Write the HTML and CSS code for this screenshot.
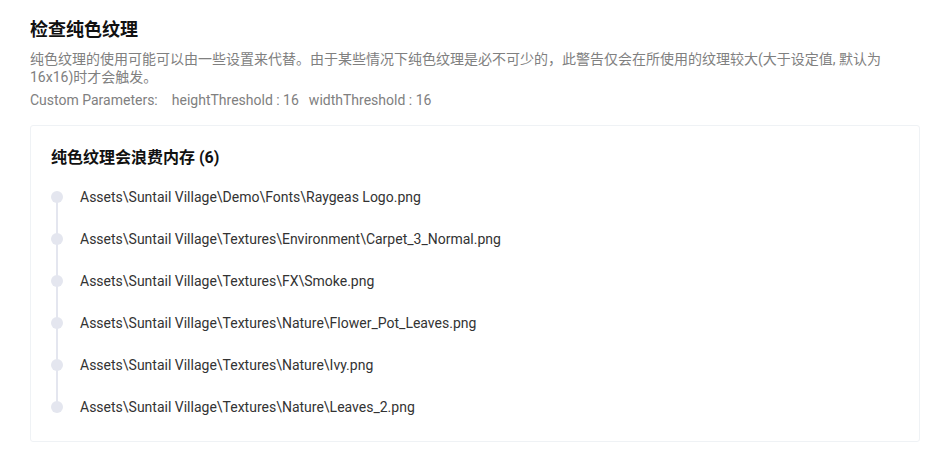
FILE: index.html
```html
<!DOCTYPE html>
<html lang="zh">
<head>
<meta charset="utf-8">
<link rel="stylesheet" href="styles.css">
</head>
<body>
<div class="page">
  <h1 class="title">检查纯色纹理</h1>
  <p class="desc">纯色纹理的使用可能可以由一些设置来代替。由于某些情况下纯色纹理是必不可少的，此警告仅会在所使用的纹理较大(大于设定值, 默认为16x16)时才会触发。</p>
  <p class="params"><span class="params-label">Custom Parameters:</span><span class="param">heightThreshold : 16</span><span class="param">widthThreshold : 16</span></p>
  <div class="card">
    <h2 class="card-title">纯色纹理会浪费内存 (6)</h2>
    <ul class="timeline">
      <li class="item">Assets\Suntail Village\Demo\Fonts\Raygeas Logo.png</li>
      <li class="item">Assets\Suntail Village\Textures\Environment\Carpet_3_Normal.png</li>
      <li class="item">Assets\Suntail Village\Textures\FX\Smoke.png</li>
      <li class="item">Assets\Suntail Village\Textures\Nature\Flower_Pot_Leaves.png</li>
      <li class="item">Assets\Suntail Village\Textures\Nature\Ivy.png</li>
      <li class="item">Assets\Suntail Village\Textures\Nature\Leaves_2.png</li>
    </ul>
  </div>
</div>
</body>
</html>
```

FILE: styles.css
```css
* { box-sizing: border-box; }
html, body { margin: 0; padding: 0; background: #ffffff; }
body {
  font-family: Roboto, "Noto Sans CJK SC", sans-serif;
  color: #111111;
}
.page {
  padding: 19px 15px 0 30px;
}
.title {
  margin: 0;
  font-size: 18px;
  line-height: 22px;
  font-weight: 700;
  color: #111111;
}
.desc {
  margin: 9px 0 0 0;
  font-size: 14px;
  line-height: 18px;
  color: #808080;
  padding-right: 30px;
}
.params {
  margin: 5px 0 0 0;
  font-size: 14px;
  line-height: 18px;
  color: #808080;
  display: flex;
}
.params-label { margin-right: 14px; }
.param { margin-right: 10px; }
.card {
  margin-top: 16px;
  border: 1px solid #eff2f5;
  border-radius: 3px;
  padding: 21px 20px 13px 20px;
}
.card-title {
  margin: 0;
  font-size: 16px;
  line-height: 22px;
  font-weight: 700;
  color: #111111;
}
.timeline {
  list-style: none;
  margin: 7px 0 0 0;
  padding: 0;
}
.item {
  position: relative;
  height: 42px;
  line-height: 42px;
  padding-left: 29px;
  font-size: 14px;
  color: #333333;
}
.item::before {
  content: "";
  position: absolute;
  left: 5px;
  top: 21px;
  width: 2px;
  height: 42px;
  background: #e4e6ef;
}
.item:last-child::before { display: none; }
.item::after {
  content: "";
  position: absolute;
  left: 0;
  top: 15px;
  width: 12px;
  height: 12px;
  border-radius: 50%;
  background: #e4e6ef;
}
```
